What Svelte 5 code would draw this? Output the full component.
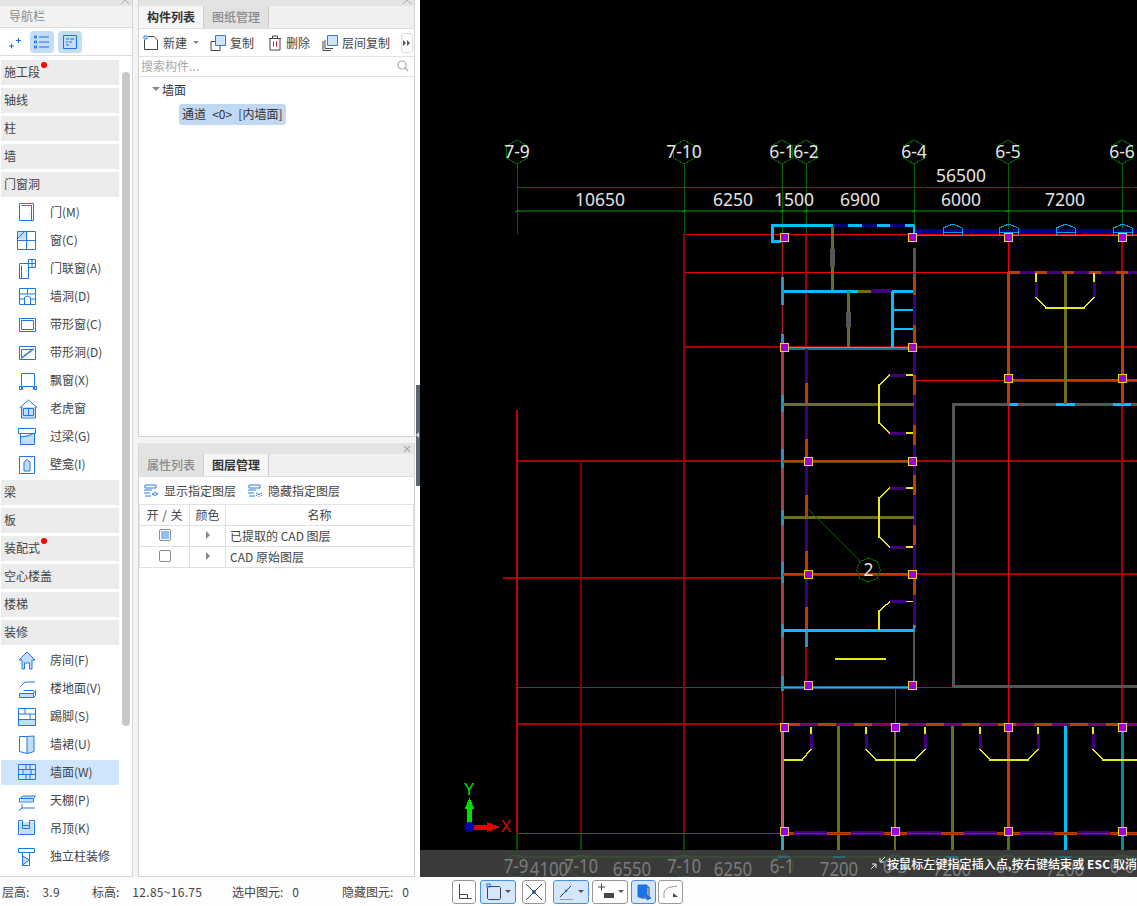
<script>
  // 导航栏
  const icons = {
    door: { d: 'M2.5 .5h14v17h-14zM4.5 2.5h10v15M12.5 11h.6' },
    window: { f: 'M1 0h8v8.5H1z', d: 'M.5 .5h18v18H.5zM9.5 .5v18M.5 9.5h18M1 7l6-6' },
    combo: { d: 'M2.5 4.5h9v15h-9zM4.5 6.5v13M11.5 .5h7v8h-7zM15 .5v8M11.5 4.5h7M9 12h.6' },
    hole: { d: 'M2.5 1.5h16v16h-16zM2.5 7h16M10.500 1.500v5.500M2.500 12h5M13.500 12h5M7.500 17.500v-7q3-3 6 0v7' },
    strip: { d: 'M2.5 3.500h16v13h-16zM4.500 5.500h12v9h-12z' },
    striphole: { d: 'M2.500 3.500h16v13h-16zM4.500 15.500v-9h12zM4.500 14.500l12-9' },
    bay: { d: 'M4.500 18v-15.500h13V18M2.500 15.500h3v3h-3zM16.500 15.500h3v3h-3zM5.500 15.500h11' },
    dormer: { f: 'M5 8h13v10H5z', d: 'M2.500 9l9-8 9 8M4.500 8v11h14V8M6.500 9.500h10v7h-10zM11.500 9.500v7' },
    lintel: { f: 'M3.500 9l14-3v11h-14z', d: 'M1.500 1.500h17v5h-17zM3.500 6.500v11h14v-11M3.500 10q8 0 14-4' },
    niche: { f: 'M7 7l3-2.500 3 2.500v9H7z', d: 'M2.500 1.500h15v17h-15zM7 7l3-2.500 3 2.500v9H7z' },
    room: { f: 'M10 1l8 8h-3v9h-2.500v-6h-5v6H5V9H2z', d: 'M10 1l8 8h-3v9h-2.500v-6h-5v6H5V9H2z' },
    floor: { f: 'M3 14h12l2-3v5l-2 2H3z', d: 'M3 8l5-5h10M6.500 11.500h10.500M2.500 14.500h14l2-3v5l-2 2h-14zM16.500 14.500v4' },
    skirt: { f: 'M1.500 13h17v5.500h-17z', d: 'M1.500 1.500h17v17h-17zM1.500 7h17M1.500 12.500h17M8 1.500V7M13 7v5.500' },
    dado: { f: 'M10 3l7-2v15l-7 2z', d: 'M2.500 1.500h7.500l7-.5v15.500l-7 2-7.500-2zM10 1.500v17' },
    wall: { f: 'M6 7h9v5H6z', d: 'M1.500 1.500h17v15h-17zM1.500 6.500h17M1.500 11.500h17M9 1.500v5M13 1.500v5M6 6.500v5M14 6.500v5M9 11.500v5M13 11.500v5' },
    ceiling: { f: 'M4 5h12v5H4z', d: 'M2.500 8l3-3h13l-2 2.500H2.500v3.500h14V7.500M5 13v4.500M1.500 20l3.500-3h13' },
    hang: { f: 'M2.500 3h14v13h-14z', d: 'M1.500 1.500h4v5h7v-5h5v14h-16zM5.500 6.500v3h7v-3' },
    column: { f: 'M6 9l7 4-7 5z', d: 'M1.500 1.500h16v4h-16zM5.500 5.500v13h7M5.500 9l7 4-7 5M12.500 5.500v13' }
  };

  const navItems = [
    { t: '施工段', dot: true }, { t: '轴线' }, { t: '柱' }, { t: '墙' }, { t: '门窗洞' },
    { t: '门(M)', i: 'door' }, { t: '窗(C)', i: 'window' }, { t: '门联窗(A)', i: 'combo' },
    { t: '墙洞(D)', i: 'hole' }, { t: '带形窗(C)', i: 'strip' }, { t: '带形洞(D)', i: 'striphole' },
    { t: '飘窗(X)', i: 'bay' }, { t: '老虎窗', i: 'dormer' }, { t: '过梁(G)', i: 'lintel' }, { t: '壁龛(I)', i: 'niche' },
    { t: '梁' }, { t: '板' }, { t: '装配式', dot: true }, { t: '空心楼盖' }, { t: '楼梯' }, { t: '装修' },
    { t: '房间(F)', i: 'room' }, { t: '楼地面(V)', i: 'floor' }, { t: '踢脚(S)', i: 'skirt' }, { t: '墙裙(U)', i: 'dado' },
    { t: '墙面(W)', i: 'wall', active: true }, { t: '天棚(P)', i: 'ceiling' }, { t: '吊顶(K)', i: 'hang' }, { t: '独立柱装修', i: 'column' }
  ];

  // 图层表
  const layers = [
    { name: '已提取的 CAD 图层', on: true },
    { name: 'CAD 原始图层', on: false }
  ];

  const status = [
    { label: '层高:', val: '3.9', w: 90, wide: true },
    { label: '标高:', val: '12.85~16.75', w: 140, wide: true },
    { label: '选中图元:', val: '0', w: 110 },
    { label: '隐藏图元:', val: '0', w: 90 }
  ];

  // CAD 画布,坐标就是页面坐标
  const RED = '#f00000', DRED = '#a80000', GREEN = '#006400', CY = '#00bfff', OL = '#6e6e14';
  const OR = '#b84000', PU = '#40007c', NV = '#000080', GY = '#555555', YE = '#e8e820';

  // x1, y1, x2, y2, 颜色, 线宽
  const redLines = [
    [684, 234, 1137, 234, RED, 1], [684, 272, 1137, 272, RED, 1], [684, 347, 1137, 347, DRED, 2],
    [915, 380, 1137, 380, RED, 1], [517, 461, 1137, 461, DRED, 2], [503, 578, 782, 578, DRED, 2], [912, 574, 1137, 574, DRED, 2],
    [517, 687, 1137, 687, '#d80000', 1], [517, 724, 1137, 724, DRED, 2], [517, 833, 1137, 833, RED, 1],
    [517, 410, 517, 833, '#c80000', 2], [581, 461, 581, 833, '#800000', 2], [684, 234, 684, 833, '#900000', 2],
    [517, 834, 517, 850, '#005000', 2], [581, 834, 581, 850, '#004800', 2], [684, 834, 684, 850, '#004800', 2],
    [806, 234, 806, 350, DRED, 2], [806, 647, 806, 687, DRED, 2], [1008, 234, 1008, 724, RED, 1], [1122, 234, 1122, 724, DRED, 2],
    [895, 687, 895, 727, RED, 1]
  ];

  // 虚实交替的墙段
  function dashes(fixed, from, to, on, off, c1, c2, horiz) {
    const out = [];
    let p = from, i = 0;
    while (p < to) {
      const len = i % 2 ? off : on;
      const e = Math.min(p + len, to);
      out.push(horiz ? [p, fixed, e, fixed, i % 2 ? c2 : c1, 3] : [fixed, p, fixed, e, i % 2 ? c2 : c1, 3]);
      p = e;
      i++;
    }
    return out;
  }

  const walls = [
    // 左上角房间
    [772, 225, 833, 225, CY, 3], [772, 224, 772, 242, CY, 3], [771, 241, 782, 241, CY, 3],
    [833, 225, 914, 225, NV, 3], [848, 225, 862, 225, CY, 3], [877, 225, 890, 225, CY, 3], [905, 225, 914, 225, CY, 3],
    [914, 225, 914, 236, CY, 2], [915, 231, 1137, 231, NV, 4],
    [914, 235.500, 1137, 235.500, OL, 1],
    [832.500, 226, 832.500, 290, OL, 3], [832.500, 249, 832.500, 267, GY, 5],
    [783, 291, 858, 291, CY, 3], [858, 291, 871, 291, OL, 3], [871, 291, 891, 291, PU, 4], [892, 291, 914, 291, CY, 3],
    [848, 291, 848, 347, OL, 3], [848, 312, 848, 327, GY, 5],
    [892, 291, 892, 347, CY, 3], [892, 310, 914, 310, CY, 2], [892, 329, 914, 329, CY, 2],
    [783, 348, 912, 348, '#1a6f90', 3], [783, 347.500, 912, 347.500, CY, 1],
    // 左外墙
    [782, 240, 782, 349, NV, 3], [782, 349, 782, 691, '#a84040', 3], [782, 691, 782, 725, NV, 3], [782, 240, 782, 349, '#b02030', 1], [782, 691, 782, 725, '#b02030', 1],
    [782, 277, 782, 305, '#3090c0', 3], [782, 334, 782, 343, '#3090c0', 3], [782, 395, 782, 412, '#3090c0', 3],
    [782, 449, 782, 468, '#3090c0', 3], [782, 510, 782, 525, '#3090c0', 3], [782, 562, 782, 583, '#3090c0', 3],
    [782, 624, 782, 637, '#3090c0', 3], [782, 676, 782, 691, '#3090c0', 3],
    // 6-2 轴内墙
    ...dashes(806, 349, 629, 34, 22, PU, OR, false),
    [806, 630, 806, 647, '#2a90b8', 3],
    // 右墙
    [914, 248, 914, 277, GY, 3], [914, 277, 914, 295, OR, 3],
    ...dashes(914, 295, 628, 30, 20, PU, OR, false),
    [914, 630, 914, 685, GY, 2], [914, 625, 914, 632, '#3090c0', 2],
    // 走廊横墙
    [783, 404, 914, 404, OL, 3], [783, 461, 914, 461, '#5a4a10', 3], [783, 461, 914, 461, OR, 2],
    [783, 517.500, 914, 517.500, OL, 3], [783, 574, 914, 574, '#5a4a10', 3], [783, 574, 914, 574, '#c83800', 2],
    [783, 630.500, 914, 630.500, CY, 3], [835, 659, 886, 659, YE, 2],
    [783, 687, 914, 687, '#1a6f90', 3], [783, 687, 914, 687, CY, 1],
    // 大房间灰墙
    [953.500, 403, 953.500, 687, GY, 3], [953, 404, 1137, 404, GY, 3], [953, 686, 1137, 686, GY, 3],
    [1009, 404, 1018, 404, CY, 3], [1056, 404, 1075, 404, CY, 3], [1113, 404, 1131, 404, CY, 3],
    // 右上房间
    ...dashes(272, 1008, 1137, 12, 15, OR, PU, true),
    [1008.500, 272, 1008.500, 404, OR, 3], [1122, 272, 1122, 404, OR, 3],
    [1008, 380, 1137, 380, '#5a4a10', 3], [1008, 380, 1137, 380, '#c83800', 2],
    [1065, 273, 1065, 404, OL, 3],
    // 下排
    ...dashes(724.500, 782, 1137, 18, 18, OR, '#7a0070', true),
    [782, 728, 782, 850, '#40a0c0', 3], [782, 728, 782, 833, '#c05050', 1],
    [838.500, 726, 838.500, 850, OL, 3], [895, 730, 895, 850, OL, 2], [952, 726, 952, 850, OL, 3],
    [1008, 730, 1008, 850, '#4a7a00', 3], [1008, 730, 1008, 833, '#c83800', 2], [1065, 726, 1065, 850, CY, 3], [1122, 730, 1122, 850, '#0a8ca0', 3],
    [895, 730, 895, 830, '#c05020', 1],
    [782, 833, 1137, 833, OR, 3],
    [794, 833, 827, 833, PU, 4], [851, 833, 884, 833, PU, 4], [907, 833, 941, 833, PU, 4],
    [964, 833, 997, 833, PU, 4], [1020, 833, 1054, 833, PU, 4], [1077, 833, 1110, 833, PU, 4],
    [782, 833, 1137, 833, '#d80020', 1]
  ];

  const doors = [
    'M913 375H890L879 385V423L890 433H913',
    'M913 488H890L879 498V537L890 547H913',
    'M913 601.500H890L879 611V630',
    'M1036 273V297L1046 308H1084L1094 297V273',
    'M811 727V749L802 760H784',
    'M866 727V749L876 760H915L925 749V727',
    'M980 727V749L990 760H1028L1038 749V727',
    'M1093 727V749L1103 760H1137'
  ];
  const doorPurple = [
    [890, 375, 906, 375], [890, 433, 906, 433], [890, 488, 906, 488], [890, 547, 906, 547], [890, 601.500, 906, 601.500],
    [1036, 282, 1036, 297], [1094, 282, 1094, 297], [811, 734, 811, 749], [866, 734, 866, 749], [925, 734, 925, 749],
    [980, 734, 980, 749], [1038, 734, 1038, 749], [1093, 734, 1093, 749]
  ];
  const bays = [943, 999, 1056, 1113];

  const axes = [
    { x: 517, t: '7-9' }, { x: 684, t: '7-10' }, { x: 782, t: '6-1' }, { x: 806, t: '6-2' },
    { x: 914, t: '6-4' }, { x: 1008, t: '6-5' }, { x: 1122, t: '6-6' }
  ];
  const dims = [
    { x: 600, t: '10650' }, { x: 733, t: '6250' }, { x: 794, t: '1500' }, { x: 860, t: '6900' }, { x: 961, t: '6000' }, { x: 1065, t: '7200' }
  ];
  const ghost = [
    { x: 516, t: '7-9' }, { x: 549, t: '4100' }, { x: 581, t: '7-10' }, { x: 632, t: '6550' }, { x: 684, t: '7-10' },
    { x: 733, t: '6250' }, { x: 782, t: '6-1' }, { x: 839, t: '7200' }, { x: 895, t: '6-3' }, { x: 952, t: '7200' },
    { x: 1008, t: '6-5' }, { x: 1065, t: '7200' }, { x: 1122, t: '6-6' }
  ];
  const ghostTeal = [[778, 790], [833, 845], [946, 958], [1059, 1071]];

  const cols = [
    [784, 237], [912, 237], [1008, 237], [1122, 237], [784, 347], [912, 347], [1008, 378], [1122, 378],
    [808, 461], [912, 461], [808, 574], [912, 574], [808, 685], [912, 685],
    [784, 727], [895, 727], [1008, 727], [1122, 727], [784, 831], [895, 831], [1008, 831], [1122, 831]
  ];

  function hex(x, y, r) {
    let p = '';
    for (let i = 0; i < 6; i++) {
      const a = Math.PI / 6 + i * Math.PI / 3;
      p += (x + r * Math.cos(a)).toFixed(1) + ',' + (y + r * Math.sin(a)).toFixed(1) + ' ';
    }
    return p;
  }
</script>

<div class="page">
  <div class="main">
    <!-- 导航栏 -->
    <aside class="nav">
      <div class="strip"><svg class="chev" width="10" height="6" viewBox="0 0 10 6"><path d="M1 5l4-4 4 4" /></svg></div>
      <div class="nav-title">导航栏</div>
      <div class="nav-tools">
        <svg class="tool-plain" width="16" height="16" viewBox="0 0 16 16"><path d="M2 12h5M4.500 9.500v5M9 6.500h5M11.500 4v5" /></svg>
        <span class="tool-on"><svg width="18" height="16" viewBox="0 0 18 16"><path d="M6 3h10M6 8h10M6 13h10M1.500 2h2v2h-2zM1.500 7h2v2h-2zM1.500 12h2v2h-2z" /></svg></span>
        <span class="tool-on"><svg width="16" height="16" viewBox="0 0 16 16"><path d="M1.500 1.500h13v13h-13zM4 5h3M8 5h4M4 8h2M7 8h3M4 11h3" /></svg></span>
      </div>
      <div class="nav-list">
        {#each navItems as it}
          {#if it.i}
            <div class="nav-child" class:active={it.active}>
              <svg class="nav-ico" width="20" height="20" viewBox="0 0 20 20">
                {#if icons[it.i].f}<path class="ico-fill" d={icons[it.i].f} />{/if}
                <path class="ico-line" d={icons[it.i].d} />
              </svg>
              <span>{it.t}</span>
            </div>
          {:else}
            <div class="nav-group">{it.t}{#if it.dot}<i class="dot"></i>{/if}</div>
          {/if}
        {/each}
        <div class="scroll"></div>
      </div>
    </aside>

    <!-- 中间面板 -->
    <div class="mid">
      <section class="panel top">
        <div class="strip"><svg class="chev" width="10" height="6" viewBox="0 0 10 6"><path d="M1 5l4-4 4 4" /></svg></div>
        <div class="tabs">
          <span class="tab on">构件列表</span>
          <span class="tab">图纸管理</span>
        </div>
        <div class="tb">
          <span class="tb-btn">
            <svg width="16" height="16" viewBox="0 0 16 16"><path class="dk" d="M5 1.500h6l3.500 3.500v9.500h-13V5" /><path class="bl" d="M1 1h3v3H1z" /></svg>新建
            <i class="caret"></i>
          </span>
          <span class="tb-btn">
            <svg width="16" height="16" viewBox="0 0 16 16"><path class="dk" d="M1 6.500h9v9H1z" /><path class="bl2" d="M5.500 .5h10v10h-10z" /></svg>复制
          </span>
          <span class="tb-btn del">
            <svg width="14" height="16" viewBox="0 0 14 16"><path class="dk" d="M1 3.500h12M4.500 3.500V1h5v2.500M2 3.500v11.500h10V3.500" /><path class="rd" d="M5.500 6.500v5M8.500 6.500v5" /></svg>删除
          </span>
          <span class="tb-btn floor">
            <svg width="16" height="16" viewBox="0 0 16 16"><path class="dk" d="M1 6v9.500h8M3 5v8.500h8" /><path class="bl2" d="M5.500 .5h10v10h-10z" /></svg>层间复制
          </span>
          <span class="more"><svg width="8" height="8" viewBox="0 0 8 8"><path d="M0 1l3 3-3 3zM4 1l3 3-3 3z" /></svg></span>
        </div>
        <div class="search">
          <span>搜索构件...</span>
          <svg width="12" height="12" viewBox="0 0 12 12"><circle cx="5" cy="5" r="4" /><path d="M8 8l3 3" /></svg>
        </div>
        <div class="tree">
          <div class="tree-root"><i class="caret down"></i>墙面</div>
          <span class="tree-leaf">通道 &lt;0&gt; [内墙面]</span>
        </div>
      </section>

      <section class="panel bottom">
        <div class="strip tall"><svg class="x" width="8" height="8" viewBox="0 0 8 8"><path d="M1 1l6 6M7 1L1 7" /></svg></div>
        <div class="tabs">
          <span class="tab">属性列表</span>
          <span class="tab on">图层管理</span>
        </div>
        <div class="tb layer-tb">
          <span class="tb-btn">
            <svg width="16" height="14" viewBox="0 0 16 14"><path class="bl" d="M2 1h11v3H2zM1 6h8M1 9h6M2 12h6M9 10q3-3 6 0-3 3-6 0z" /></svg>显示指定图层
          </span>
          <span class="tb-btn">
            <svg width="16" height="14" viewBox="0 0 16 14"><path class="bl" d="M2 1h11v3H2zM1 6h8M1 9h6M2 12h6M9 9q3 3 6 0M10 11l-1 1M12 12v1M14 11l1 1" /></svg>隐藏指定图层
          </span>
        </div>
        <div class="ltable">
          <div class="lrow head">
            <span>开 / 关</span><span>颜色</span><span>名称</span>
          </div>
          {#each layers as l}
            <div class="lrow">
              <span><i class="check" class:on={l.on}></i></span>
              <span><i class="tri"></i></span>
              <span class="lname">{l.name}</span>
            </div>
          {/each}
        </div>
      </section>
    </div>

    <div class="split"><span class="grip"><i></i></span></div>

    <!-- CAD 画布 -->
    <div class="canvas">
      <svg class="cad" width="717" height="877" viewBox="420 0 717 877">
        <line x1="517" y1="187" x2="1137" y2="187" stroke="#006400" />
        <line x1="517" y1="211" x2="1137" y2="211" stroke="#004c00" stroke-width="2" />
        {#each axes as a}
          <polygon points={hex(a.x, 152, 12)} fill="none" stroke={GREEN} />
          <line x1={a.x} y1="164" x2={a.x} y2={a.x === 517 ? 234 : 237} stroke={GREEN} />
          <text class="ax" x={a.x} y="158" text-anchor="middle">{a.t}</text>
          <path d="M{a.x - 2} 212l4-2" stroke="#10a010" />
        {/each}
        {#each redLines as l}
          <line x1={l[0]} y1={l[1]} x2={l[2]} y2={l[3]} stroke={l[4]} stroke-width={l[5]} />
        {/each}
        {#each walls as l}
          <line x1={l[0]} y1={l[1]} x2={l[2]} y2={l[3]} stroke={l[4]} stroke-width={l[5]} />
        {/each}
        {#each bays as b}
          <path d="M{b} 235v-7l10-4 9 4v7zM{b} 232.500h19" fill="none" stroke="#00a0e0" />
        {/each}
        {#each doors as d}
          <path {d} fill="none" stroke={YE} stroke-width="1.500" />
        {/each}
        {#each doorPurple as l}
          <line x1={l[0]} y1={l[1]} x2={l[2]} y2={l[3]} stroke={PU} stroke-width="3" />
        {/each}
        <text class="dm" x="961" y="182" text-anchor="middle">56500</text>
        {#each dims as t}
          <text class="dm" x={t.x} y="206" text-anchor="middle">{t.t}</text>
        {/each}
        <path d="M808 509L860 561" stroke={GREEN} />
        <polygon points="868.500,558 877,561.500 880.500,570 877,578.500 868.500,582 860,578.500 856.500,570 860,561.500" fill="none" stroke={GREEN} />
        <text class="ax" x="868.500" y="576" text-anchor="middle">2</text>
        {#each cols as c}
          <rect x={c[0] - 3.500} y={c[1] - 3.500} width="8" height="8" fill="#a000e0" stroke="#e8d820" />
        {/each}
        <!-- 坐标系 -->
        <path d="M469.500 827V808" stroke="#00e000" stroke-width="4.500" />
        <path d="M469.500 798l5 11h-10z" fill="#00e000" />
        <path d="M474 827h14" stroke="#e80000" stroke-width="5" />
        <path d="M500 827l-13-5v10z" fill="#e80000" />
        <circle cx="469.500" cy="827" r="5" fill="#0000b0" />
        <text class="xy" x="506" y="832" fill="#e80000" text-anchor="middle">X</text>
        <text class="xy" x="469" y="795" fill="#00e000" text-anchor="middle">Y</text>
      </svg>
      <div class="tipbar">
        <svg class="ghosts" width="717" height="27" viewBox="420 850 717 27">
          <line x1="517" y1="857" x2="1137" y2="857" stroke="#3a5a3a" />
          {#each ghostTeal as g}
            <line x1={g[0]} y1="857" x2={g[1]} y2="857" stroke="#2a6a7a" stroke-width="2" />
          {/each}
          {#each ghost as g}
            {#if g.t.includes('-')}
              <circle cx={g.x} cy="866" r="11" fill="none" stroke="#3a5a3a" />
            {/if}
            <g transform="translate({g.x} {g.t.includes('-') ? 873 : 876}) scale(.84 1)">
              <text text-anchor="middle">{g.t}</text>
            </g>
          {/each}
        </svg>
        <svg class="tip-ico" width="16" height="14" viewBox="0 0 16 14"><path d="M15 1l-5 5M10 2v4h4M1 13l5-5M2 8h4v4" /></svg>
        <span class="tip">按鼠标左键指定插入点,按右键结束或 <b>ESC</b> 取消</span>
      </div>
    </div>
  </div>

  <!-- 状态栏 -->
  <footer class="status">
    <div class="stat-list">
      {#each status as st}
        <span class="stat" style="width:{st.w}px">{st.label}<b class:wide={st.wide}>{st.val}</b></span>
      {/each}
    </div>
    <div class="btns">
      <span class="sb"><svg width="16" height="18" viewBox="0 0 16 18"><path d="M3.500 1v14.500h12M3.500 11.500h8v4" /></svg></span>
      <span class="sb on wide"><svg width="16" height="18" viewBox="0 0 16 18"><path d="M2.500 3.500h11l1 1v11l-1 1h-11l-1-1v-11z" /><rect class="hl" x="1" y="1" width="3" height="3" /></svg><i class="caret"></i></span>
      <span class="sb"><svg width="18" height="18" viewBox="0 0 18 18"><path d="M1 1l16 16M17 1L1 17" /><circle class="hl" cx="9" cy="9" r="1.500" /></svg></span>
      <span class="sb on wide"><svg width="16" height="18" viewBox="0 0 16 18"><path d="M1 14L12 3" /><path class="gy" d="M1 16.500h13" /><circle class="hl" cx="7" cy="8" r="1" /></svg><i class="caret"></i></span>
      <span class="sb wide"><svg width="18" height="18" viewBox="0 0 18 18"><path d="M1 4h7M4.500 .5v7" /><path class="solid" d="M7 10h10v5H7z" /></svg><i class="caret"></i></span>
      <span class="sb on"><svg width="16" height="18" viewBox="0 0 16 18"><path class="solid-b" d="M2 2h9v12H2z" /><path d="M11 4h2v11H5v-1" /><path class="solid-b" d="M11 12l4 3-4 2z" /></svg></span>
      <span class="sb"><svg width="18" height="18" viewBox="0 0 18 18"><path class="gy" d="M2 15V10Q3 5 9 4l6-1" /><path class="solid" d="M11 10l5 4h-5z" /></svg></span>
    </div>
  </footer>
</div>

<style>
  :global(body) {
    margin: 0;
    background: #fff;
  }

  .page {
    width: 1137px;
    height: 906px;
    display: flex;
    flex-direction: column;
    overflow: hidden;
    font-family: "Noto Sans CJK SC", "Liberation Sans", sans-serif;
    font-size: 12px;
    color: #444;
  }

  .main {
    display: flex;
    height: 877px;
    background: #f4f4f4;
  }

  /* 顶部细条 */
  .strip {
    height: 6px;
    background: #e4e4e4;
    display: flex;
    justify-content: flex-end;
    align-items: center;
    padding-right: 2px;
    overflow: hidden;
  }

  .strip.tall {
    height: 11px;
  }

  .chev {
    fill: none;
    stroke: #aaa;
    margin-top: -2px;
  }

  .x {
    fill: none;
    stroke: #aaa;
    stroke-width: 1.200;
    margin-right: 1px;
  }

  /* 导航栏 */
  .nav {
    width: 133px;
    background: #fff;
    border-right: 1px solid #d4d4d4;
    border-bottom: 1px solid #d4d4d4;
    box-sizing: border-box;
    flex: none;
    display: flex;
    flex-direction: column;
  }

  .nav-title {
    height: 21px;
    line-height: 20px;
    padding-left: 9px;
    color: #8a8a8a;
    background: #f2f2f2;
    border-bottom: 1px solid #dcdcdc;
  }

  .nav-tools {
    height: 28px;
    display: flex;
    align-items: center;
    padding-left: 7px;
    gap: 4px;
    border-bottom: 1px solid #dcdcdc;
    box-sizing: border-box;
  }

  .nav-tools svg {
    fill: none;
    stroke: #1a73e8;
    display: block;
  }

  .tool-plain {
    margin-right: 3px;
  }

  .tool-on {
    width: 24px;
    height: 22px;
    border-radius: 4px;
    background: #c4dcf5;
    display: flex;
    align-items: center;
    justify-content: center;
  }

  .nav-list {
    position: relative;
    padding-top: 4px;
  }

  .nav-group,
  .nav-child {
    width: 118px;
    height: 25px;
    margin: 0 0 3px 1px;
    display: flex;
    align-items: center;
    color: #444;
    position: relative;
  }

  .nav-group {
    background: #ececec;
    padding: 0 0 2px 3px;
    box-sizing: border-box;
  }

  .nav-child {
    padding-left: 16px;
    box-sizing: border-box;
    gap: 13px;
  }

  .nav-child span {
    padding-bottom: 2px;
  }

  .nav-child.active {
    background: #cfe5fc;
  }

  .nav-ico {
    flex: none;
  }

  .ico-line {
    fill: none;
    stroke: #1f76e6;
    stroke-width: 1;
  }

  .ico-fill {
    fill: #c5dcf7;
  }

  .dot {
    position: absolute;
    left: 40px;
    top: 2px;
    width: 6px;
    height: 6px;
    border-radius: 50%;
    background: #f00;
  }

  .scroll {
    position: absolute;
    left: 122px;
    top: 16px;
    width: 8px;
    height: 654px;
    border-radius: 4px;
    background: #c8c8c8;
  }

  /* 中间面板 */
  .mid {
    width: 277px;
    margin-left: 5px;
    flex: none;
    display: flex;
    flex-direction: column;
    gap: 6px;
  }

  .panel {
    background: #fff;
    border-right: 1px solid #d4d4d4;
    border-bottom: 1px solid #d4d4d4;
    border-left: 1px solid #d4d4d4;
    box-sizing: border-box;
  }

  .panel.top {
    height: 437px;
  }

  .panel.bottom {
    flex: 1;
  }

  .tabs {
    display: flex;
    height: 23px;
    background: #f0f0f0;
    border-bottom: 1px solid #dcdcdc;
    box-sizing: border-box;
  }

  .tab {
    width: 64px;
    text-align: center;
    line-height: 22px;
    color: #8a8a8a;
    background: #e2e2e2;
    border-right: 1px solid #ccc;
    font-weight: 500;
  }

  .tab.on {
    color: #333;
    background: #f6f6f6;
    font-weight: 700;
  }

  .tb {
    height: 28px;
    display: flex;
    align-items: center;
    padding-left: 4px;
    gap: 11px;
    border-bottom: 1px solid #e2e2e2;
    box-sizing: border-box;
    position: relative;
  }

  .tb-btn {
    display: flex;
    align-items: center;
    gap: 4px;
    white-space: nowrap;
  }

  .tb-btn.del {
    margin-left: 3px;
  }

  .tb-btn.floor {
    margin-left: 1px;
  }

  .layer-tb .tb-btn {
    gap: 5px;
  }

  .tb svg {
    fill: none;
  }

  .dk {
    stroke: #444;
  }

  .bl {
    stroke: #2a7de1;
  }

  .bl2 {
    stroke: #2a7de1;
    fill: #cfe2fa;
  }

  .rd {
    stroke: #d02020;
  }

  .caret {
    display: inline-block;
    width: 0;
    height: 0;
    border-top: 3px solid #888;
    border-left: 3px solid transparent;
    border-right: 3px solid transparent;
    margin-left: 2px;
  }

  .more {
    position: absolute;
    right: 1px;
    top: 4px;
    width: 10px;
    height: 18px;
    border: 1px solid #ddd;
    border-radius: 3px;
    display: flex;
    align-items: center;
    justify-content: center;
  }

  .more svg {
    fill: #555;
  }

  .search {
    height: 20px;
    display: flex;
    align-items: center;
    justify-content: space-between;
    padding: 0 5px 2px 2px;
    color: #a8a8a8;
    border-bottom: 1px solid #e2e2e2;
    box-sizing: border-box;
  }

  .search svg {
    fill: none;
    stroke: #aaa;
    stroke-width: 1.200;
  }

  .tree {
    padding: 3px 0 0 13px;
  }

  .tree-root {
    height: 18px;
    display: flex;
    align-items: center;
    gap: 2px;
    color: #333;
  }

  .caret.down {
    margin-left: 0;
    border-top-width: 4px;
    border-left-width: 4px;
    border-right-width: 4px;
  }

  .tree-leaf {
    display: inline-block;
    margin: 6px 0 0 27px;
    padding: 0 4px 0 3px;
    height: 21px;
    line-height: 20px;
    background: #c0d8f2;
    border-radius: 3px;
    color: #333;
    word-spacing: 3.500px;
  }

  /* 图层表 */
  .ltable {
    border-right: 1px solid #e2e2e2;
  }

  .lrow {
    display: grid;
    grid-template-columns: 50px 36px 1fr;
    height: 21px;
    border-bottom: 1px solid #e0e0e0;
    box-sizing: border-box;
    border-left: 1px solid #e0e0e0;
  }

  .lrow > span {
    display: flex;
    align-items: center;
    justify-content: center;
    border-right: 1px solid #e0e0e0;
    padding-bottom: 2px;
  }

  .lrow.head > span {
    padding-bottom: 1px;
  }

  .lrow > span:last-child {
    border-right: none;
  }

  .lrow.head > span:first-child {
    word-spacing: 1px;
  }

  .lrow .lname {
    justify-content: flex-start;
    padding-left: 4px;
  }

  .check {
    width: 12px;
    height: 12px;
    border: 1px solid #8a8a8a;
    border-radius: 2px;
    box-sizing: border-box;
    background: #fff;
  }

  .check.on {
    background: #8ebdf8;
    box-shadow: inset 0 0 0 1px #fff;
  }

  .tri {
    width: 0;
    height: 0;
    border-left: 4px solid #888;
    border-top: 4px solid transparent;
    border-bottom: 4px solid transparent;
  }

  /* 分隔条 */
  .split {
    width: 5px;
    flex: none;
    background: #fff;
    position: relative;
  }

  .grip {
    position: absolute;
    left: 1px;
    top: 385px;
    width: 4px;
    height: 101px;
    background: #5b6670;
  }

  .grip i {
    position: absolute;
    left: 0;
    top: 47px;
    border-right: 3px solid #ddd;
    border-top: 3px solid transparent;
    border-bottom: 3px solid transparent;
  }

  /* 画布 */
  .canvas {
    flex: 1;
    background: #000;
    position: relative;
    overflow: hidden;
  }

  .cad {
    display: block;
  }

  .cad line,
  .cad path,
  .cad polygon,
  .cad rect {
    shape-rendering: crispEdges;
  }

  .ax,
  .dm {
    font-family: "Noto Sans", sans-serif;
    font-size: 17.500px;
    fill: #e4e4e4;
  }

  .xy {
    font-family: "Liberation Sans", sans-serif;
    font-size: 16px;
  }

  .tipbar {
    position: absolute;
    left: 0;
    right: 0;
    bottom: 0;
    height: 27px;
    background: #3a3a3a;
  }

  .ghosts {
    position: absolute;
    left: 0;
    top: 0;
  }

  .ghosts text {
    font-family: "Noto Sans", sans-serif;
    font-size: 20px;
    fill: #7c7c7c;
  }

  .tip-ico {
    position: absolute;
    left: 450px;
    top: 6px;
    fill: none;
    stroke: #eee;
  }

  .tip {
    position: absolute;
    left: 467px;
    top: 5px;
    color: #fff;
    white-space: nowrap;
    line-height: 17px;
    font-weight: 500;
    letter-spacing: .1px;
  }

  .tip b {
    font-weight: 700;
  }

  /* 状态栏 */
  .status {
    height: 29px;
    display: flex;
    align-items: center;
    background: #fdfdfd;
    position: relative;
  }

  .stat-list {
    display: flex;
    padding-left: 2px;
    width: 450px;
    box-sizing: border-box;
    flex: none;
  }

  .stat {
    white-space: nowrap;
  }

  .stat b {
    font-weight: 400;
    margin-left: 9px;
  }

  .stat b.wide {
    margin-left: 13px;
    letter-spacing: .3px;
  }

  .btns {
    display: flex;
    gap: 3px;
    margin-left: 2px;
  }

  .sb {
    width: 24px;
    height: 24px;
    border: 1px solid #999;
    border-radius: 3px;
    box-sizing: border-box;
    background: #fff;
    display: flex;
    align-items: center;
    justify-content: center;
  }

  .sb.wide {
    width: 36px;
  }

  .sb:nth-child(2) {
    margin-left: 1px;
  }

  .sb:nth-child(3) {
    margin-left: 3px;
  }

  .sb:nth-child(4) {
    margin-left: 4px;
  }

  .sb:nth-child(6),
  .sb:nth-child(7) {
    width: 25px;
  }

  .sb:nth-child(7) {
    margin-left: -1px;
  }

  .sb.on {
    background: #d4e6fb;
    border-color: #4a90e2;
  }

  .sb svg {
    fill: none;
    stroke: #444;
    flex: none;
  }

  .sb .caret {
    border-top-color: #555;
    margin-left: 3px;
  }

  .sb .hl {
    stroke: #1a73e8;
  }

  .sb .gy {
    stroke: #999;
  }

  .sb .solid {
    fill: #444;
    stroke: none;
  }

  .sb .solid-b {
    fill: #1a73e8;
    stroke: #1a73e8;
  }
</style>
